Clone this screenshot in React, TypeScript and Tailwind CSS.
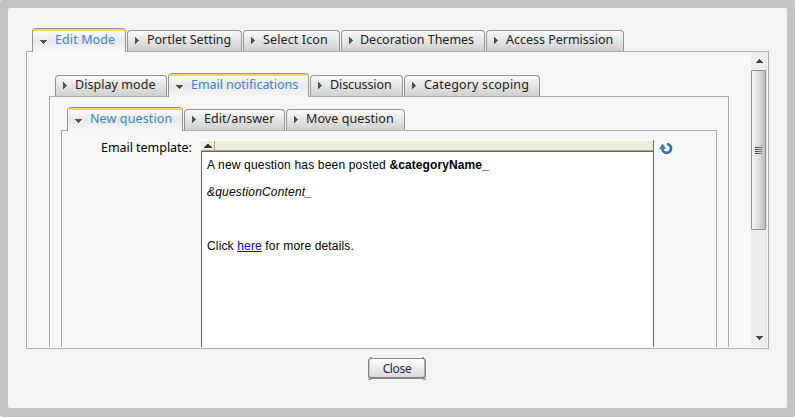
import type { ReactNode } from "react";

type TabItem = { label: string; width: string; pad: string; tracking: string; active?: boolean };

const portletTabs: TabItem[] = [
  { label: "Edit Mode", width: "w-[94px]", pad: "pl-[22px]", tracking: "tracking-[0.1px]", active: true },
  { label: "Portlet Setting", width: "w-[115px]", pad: "pl-[19px]", tracking: "tracking-[-0.01px]" },
  { label: "Select Icon", width: "w-[97px]", pad: "pl-[19px]", tracking: "tracking-[0.12px]" },
  { label: "Decoration Themes", width: "w-[144px]", pad: "pl-[18px]", tracking: "tracking-[-0.02px]" },
  { label: "Access Permission", width: "w-[138px]", pad: "pl-[19px]", tracking: "tracking-[-0.01px]" },
];

const editTabs: TabItem[] = [
  { label: "Display mode", width: "w-[112px]", pad: "pl-[19px]", tracking: "tracking-[0.06px]" },
  { label: "Email notifications", width: "w-[141px]", pad: "pl-[22px]", tracking: "tracking-[-0.04px]", active: true },
  { label: "Discussion", width: "w-[93px]", pad: "pl-[19px]", tracking: "tracking-[-0.1px]" },
  { label: "Category scoping", width: "w-[136px]", pad: "pl-[19px]", tracking: "tracking-[0.17px]" },
];

const mailTabs: TabItem[] = [
  { label: "New question", width: "w-[116px]", pad: "pl-[22px]", tracking: "tracking-[0.12px]", active: true },
  { label: "Edit/answer", width: "w-[101px]", pad: "pl-[19px]", tracking: "tracking-[0.06px]" },
  { label: "Move question", width: "w-[119px]", pad: "pl-[19px]", tracking: "tracking-[0.08px]" },
];

function Tab({ label, width, pad, tracking, active }: TabItem) {
  const look = active
    ? "h-6 bg-gradient-to-b from-white via-[#e9e9e9] to-[#f7f7f7] text-[#3984d2]"
    : "mb-px h-[21px] bg-gradient-to-b from-[#fafafa] to-[#cfcfcf] text-[#202020]";
  return (
    <div className={`relative shrink-0 rounded-t-[4px] border border-b-0 border-[#929292] whitespace-nowrap ${width} ${pad} ${look}`}>
      {active && <div className="absolute inset-x-0 top-0 h-[2px] rounded-t-[2px] bg-[#fbd35c]" />}
      <svg className={active ? "absolute top-[10px] left-[7px]" : "absolute top-[6px] left-[6px]"} width="8" height="8" viewBox="0 0 8 8" shapeRendering="crispEdges">
        <path d={active ? "M0 1h7v1h-1v1h-1v1h-1v1h-1v-1h-1v-1h-1v-1h-1z" : "M1 0h1v1h1v1h1v1h1v1h-1v1h-1v1h-1v1h-1z"} fill="#505050" />
      </svg>
      <span className={`block text-[12.5px] leading-4 ${tracking} ${active ? "pt-[3px]" : "pt-px"}`}>{label}</span>
    </div>
  );
}

function TabPanel({ tabs, inset, children, open }: { tabs: TabItem[]; inset: string; children: ReactNode; open?: boolean }) {
  return (
    <div className={open ? "flex h-full flex-col" : "flex h-[321px] flex-col"}>
      <div className={`relative z-10 -mb-px flex h-6 shrink-0 items-end gap-px ${inset}`}>
        {tabs.map((tab) => <Tab key={tab.label} {...tab} />)}
      </div>
      <div className={`min-h-0 grow border border-[#ababab] bg-[#f7f7f7] ${open ? "border-b-0" : ""}`}>
        {children}
      </div>
    </div>
  );
}

function ScrollBar() {
  return (
    <div className="flex w-[16px] shrink-0 flex-col border-r border-[#e3e3e3] bg-[#eee]">
      <div className="flex h-[18px] items-center pl-[5px]">
        <svg width="7" height="4" viewBox="0 0 7 4" shapeRendering="crispEdges"><path d="M3 0h1v1h1v1h1v1h1v1H0V3h1V2h1V1h1z" fill="#444" /></svg>
      </div>
      <div className="flex h-[160px] w-[15px] items-center justify-center rounded-[1px] border border-[#929296] bg-gradient-to-r from-[#f7f7f7] via-[#dededf] to-[#b9b9c2]">
        <div className="flex w-[7px] flex-col gap-px">
          {[0, 1, 2, 3].map((n) => <div key={n} className="h-px bg-gradient-to-r from-[#333] to-[#888]" />)}
        </div>
      </div>
      <div className="flex grow items-end pb-[7px] pl-[5px]">
        <svg width="7" height="4" viewBox="0 0 7 4" shapeRendering="crispEdges"><path d="M0 0h7v1H6v1H5v1H4v1H3V3H2V2H1V1H0z" fill="#444" /></svg>
      </div>
    </div>
  );
}

function Editor() {
  return (
    <div className="flex h-full w-[453px] shrink-0 flex-col border-r border-[#686868]">
      <div className="flex h-[12px] shrink-0 border-t border-b border-t-white border-b-[#65655f] bg-[#ecedda] shadow-[inset_0_-1px_0_#a9aa9c]">
        <div className="flex w-[14px] items-center justify-center border-r border-[#a2a397]">
          <svg width="8" height="4" viewBox="0 0 8 4" shapeRendering="crispEdges"><path d="M3 0h2v1h1v1h1v1h1v1H0V3h1V2h1V1h1z" fill="#3c3028" /></svg>
        </div>
      </div>
      <div className="grow border-l border-[#686868] bg-white pt-[5px] pl-[5px] font-['Liberation_Sans',Arial,sans-serif] text-[12px] leading-4 tracking-[0.18px] text-black">
        <p>A new question has been posted <b className="tracking-[0.1px]">&amp;categoryName_</b></p>
        <p className="mt-[11px] italic">&amp;questionContent_</p>
        <p className="mt-[38px] tracking-[0.15px]">Click <a className="text-[#0000ee] underline">here</a> for more details.</p>
      </div>
    </div>
  );
}

export default function App() {
  return (
    <main className="h-[417px] w-[795px] overflow-hidden rounded-[2px] bg-[#c4c4c4] p-2 pb-[9px] font-['Noto_Sans',sans-serif]">
      <div className="h-[400px] w-[779px] rounded-[2px] bg-[#f4f4f4] pt-5 pr-[18px] pl-[18px]">
        <TabPanel tabs={portletTabs} inset="pl-[6px]">
          <div className="flex h-full border-l border-b border-white pr-px">
            <div className="flex h-full w-[701px] flex-col overflow-hidden pt-[21px] pl-[21px]">
              <TabPanel tabs={editTabs} inset="pl-[6px]" open>
                <div className="flex h-full flex-col border-l border-white pt-[10px] pr-[11px] pl-[10px]">
                  <TabPanel tabs={mailTabs} inset="pl-[6px]" open>
                    <div className="flex h-full border-l border-white pt-[9px]">
                      <div className="w-[138px] shrink-0 pl-[38px] text-[12.5px] leading-4 tracking-[-0.04px] whitespace-nowrap text-black">Email template:</div>
                      <Editor />
                      <svg className="mt-[2px] ml-[5px]" width="14" height="14" viewBox="0 0 14 14">
                        <path d="M8 2.2a4.3 4.3 0 1 1-4.6 4.3" fill="none" stroke="#316cc0" strokeWidth="2.7" />
                        <path d="M0 7L3.6 1.4 7 7z" fill="#3d7bcb" />
                      </svg>
                    </div>
                  </TabPanel>
                </div>
              </TabPanel>
            </div>
            <div className="w-[22px] shrink-0" />
            <ScrollBar />
          </div>
        </TabPanel>
        <div className="flex pt-[9px] pl-[342px]">
          <button className="relative h-[21px] w-[58px] rounded-[3px] border border-b-2 border-[#858585] bg-gradient-to-b from-white to-[#d9d9d9] pt-px text-[12px] leading-4 tracking-[-0.35px] text-[#26264c] shadow-[inset_1px_0_0_#c5c5c5,inset_-1px_0_0_#a8a8a8]">
            <i className="absolute -top-[2px] left-[1px] h-px w-[2px] bg-[#999]" />
            <i className="absolute -top-[2px] right-[1px] h-px w-[2px] bg-[#999]" />
            <i className="absolute -bottom-[3px] -left-px h-px w-[3px] bg-[#999]" />
            <i className="absolute -right-px -bottom-[3px] h-px w-[3px] bg-[#999]" />
            Close
          </button>
        </div>
      </div>
    </main>
  );
}
